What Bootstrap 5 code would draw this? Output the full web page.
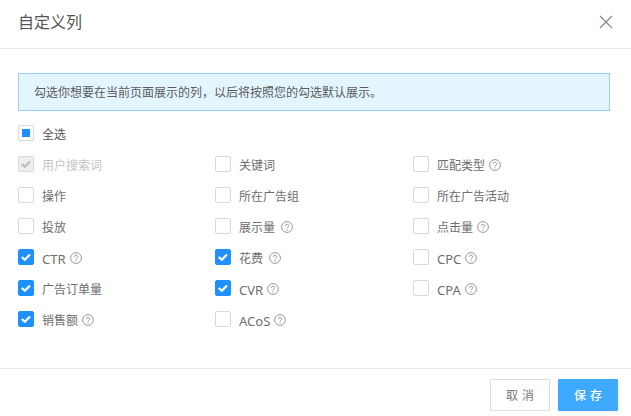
<!DOCTYPE html>
<html lang="zh-CN">
<head>
  <meta charset="UTF-8" />
  <meta name="viewport" content="width=device-width, initial-scale=1" />
  <title>自定义列</title>
  <link href="https://cdn.jsdelivr.net/npm/bootstrap@5.3.6/dist/css/bootstrap.min.css" rel="stylesheet"/>
  <style>
    body{background:#fff;color:#666;font-family:"Noto Sans","Noto Sans CJK SC",sans-serif;font-size:12px;line-height:16px}
    .dlg-head{height:49px;padding:0 18px 4px;border-bottom:1px solid #e8e8e8}
    .dlg-title{font-size:16px;line-height:24px;color:#555;font-weight:400;margin:0}
    .dlg-close{padding:0;border:0;background:none;line-height:0}
    .dlg-body{height:319px;padding:24px 21px 0 18px}
    .dlg-tip{height:38px;margin:0 0 14px;padding:2px 15px 0;background:#e3f5fe;border:1px solid #96d2f5;border-radius:0;color:#5c5c5c;font-size:12px;display:flex;align-items:center}
    .col-list{display:grid;grid-template-columns:197px 198px 197px;row-gap:15px}
    .col-item{margin:0;padding:0;min-height:0;display:flex;align-items:center;height:16px}
    .col-item .form-check-input{width:16px;height:16px;margin:0 8px 0 0;float:none;border:1px solid #d9d9d9;border-radius:2px;flex:none}
    .col-item .form-check-input:checked{background-color:#1e90ff;border-color:#1e90ff;background-size:12px 12px;background-image:url("data:image/svg+xml,%3csvg xmlns='http://www.w3.org/2000/svg' viewBox='0 0 12 12'%3e%3cpath fill='none' stroke='%23fff' stroke-width='2.2' d='M1.8 6l3 2.8 5.2-5.3'/%3e%3c/svg%3e")}
    .col-item .form-check-input:indeterminate{background-color:#fff;border-color:#d9d9d9;background-image:linear-gradient(#1e90ff,#1e90ff);background-size:8px 8px;background-position:center}
    .col-item .form-check-input:disabled{opacity:1;background-color:#eee;border-color:#d9d9d9;background-image:url("data:image/svg+xml,%3csvg xmlns='http://www.w3.org/2000/svg' viewBox='0 0 12 12'%3e%3cpath fill='none' stroke='%23bbb' stroke-width='2.2' d='M1.8 6l3 2.8 5.2-5.3'/%3e%3c/svg%3e")}
    .col-item .form-check-label{opacity:1;color:#6e6e6e;margin-top:3px}
    .col-item .form-check-input:disabled ~ .form-check-label{color:#c4c4c4;opacity:1}
    .col-item .form-check-label.latin-name{font-size:13px}
    .col-all .form-check-label{color:#555}
    .col-all{margin-bottom:15px}
    .hint-ico{width:12px;height:12px;margin:2px 0 0 4px;flex:none}
    .hint-ico.hint-far{margin-left:6px}
    .dlg-foot{height:48px;padding:10px 13px 0 0;border-top:1px solid #e8e8e8;gap:8px}
    .dlg-btn{width:60px;height:32px;padding:2px 0 0 4px;border-radius:1px;font-size:12px;letter-spacing:4px;line-height:28px}
    .dlg-cancel{background:#fff;border:1px solid #ddd;color:#777}
    .dlg-save{background:#3fa9ff;border:1px solid #3fa9ff;color:#fff;font-weight:500;box-shadow:0 1px 3px rgba(0,0,0,.08)}
  </style>
</head>
<body>
  <svg width="0" height="0" class="position-absolute">
    <symbol id="hint" viewBox="0 0 12 12">
      <circle cx="6" cy="6" r="5.4" fill="none" stroke="#999" stroke-width="1"/>
      <path d="M4.3 4.9c0-2.2 3.5-2.2 3.5-.1 0 1.2-1.8 1.2-1.8 2.6" fill="none" stroke="#999" stroke-width="1"/>
      <circle cx="6" cy="8.9" r=".65" fill="#999"/>
    </symbol>
  </svg>

  <div class="dlg-head d-flex align-items-center justify-content-between">
    <h5 class="dlg-title">自定义列</h5>
    <button class="dlg-close" type="button" aria-label="关闭">
      <svg width="14" height="14" viewBox="0 0 14 14"><path d="M1 1l12 12M13 1L1 13" stroke="#888" stroke-width="1.2" fill="none"/></svg>
    </button>
  </div>

  <div class="dlg-body">
    <div class="alert dlg-tip" role="alert">勾选你想要在当前页面展示的列，以后将按照您的勾选默认展示。</div>

    <div class="form-check col-item col-all">
      <input class="form-check-input" type="checkbox" id="checkAll">
      <label class="form-check-label" for="checkAll">全选</label>
    </div>

    <div class="col-list" id="colList"></div>
  </div>

  <div class="dlg-foot d-flex justify-content-end">
    <button class="btn dlg-btn dlg-cancel" type="button">取消</button>
    <button class="btn dlg-btn dlg-save" type="button">保存</button>
  </div>

  <script src="https://cdn.jsdelivr.net/npm/bootstrap@5.3.6/dist/js/bootstrap.bundle.min.js"></script>
  <script>
    // name, help icon (0 none, 1 normal, 2 wider gap), state: 1 checked, 2 checked and locked
    const cols = [
      ["用户搜索词",0,2],["关键词",0,0],["匹配类型",1,0],
      ["操作",0,0],["所在广告组",0,0],["所在广告活动",0,0],
      ["投放",0,0],["展示量",2,0],["点击量",1,0],
      ["CTR",1,1],["花费",2,1],["CPC",1,0],
      ["广告订单量",0,1],["CVR",1,1],["CPA",1,0],
      ["销售额",1,1],["ACoS",1,0]
    ];
    document.getElementById("colList").innerHTML = cols.map((c,i) => `
      <div class="form-check col-item">
        <input class="form-check-input" type="checkbox" id="c${i}" ${c[2]?"checked":""} ${c[2]==2?"disabled":""}>
        <label class="form-check-label ${/^[A-Za-z]+$/.test(c[0])?"latin-name":""}" for="c${i}">${c[0]}</label>
        ${c[1]?`<svg class="hint-ico ${c[1]==2?"hint-far":""}"><use href="#hint"/></svg>`:""}
      </div>`).join("");
    document.getElementById("checkAll").indeterminate = true;
  </script>
</body>
</html>
